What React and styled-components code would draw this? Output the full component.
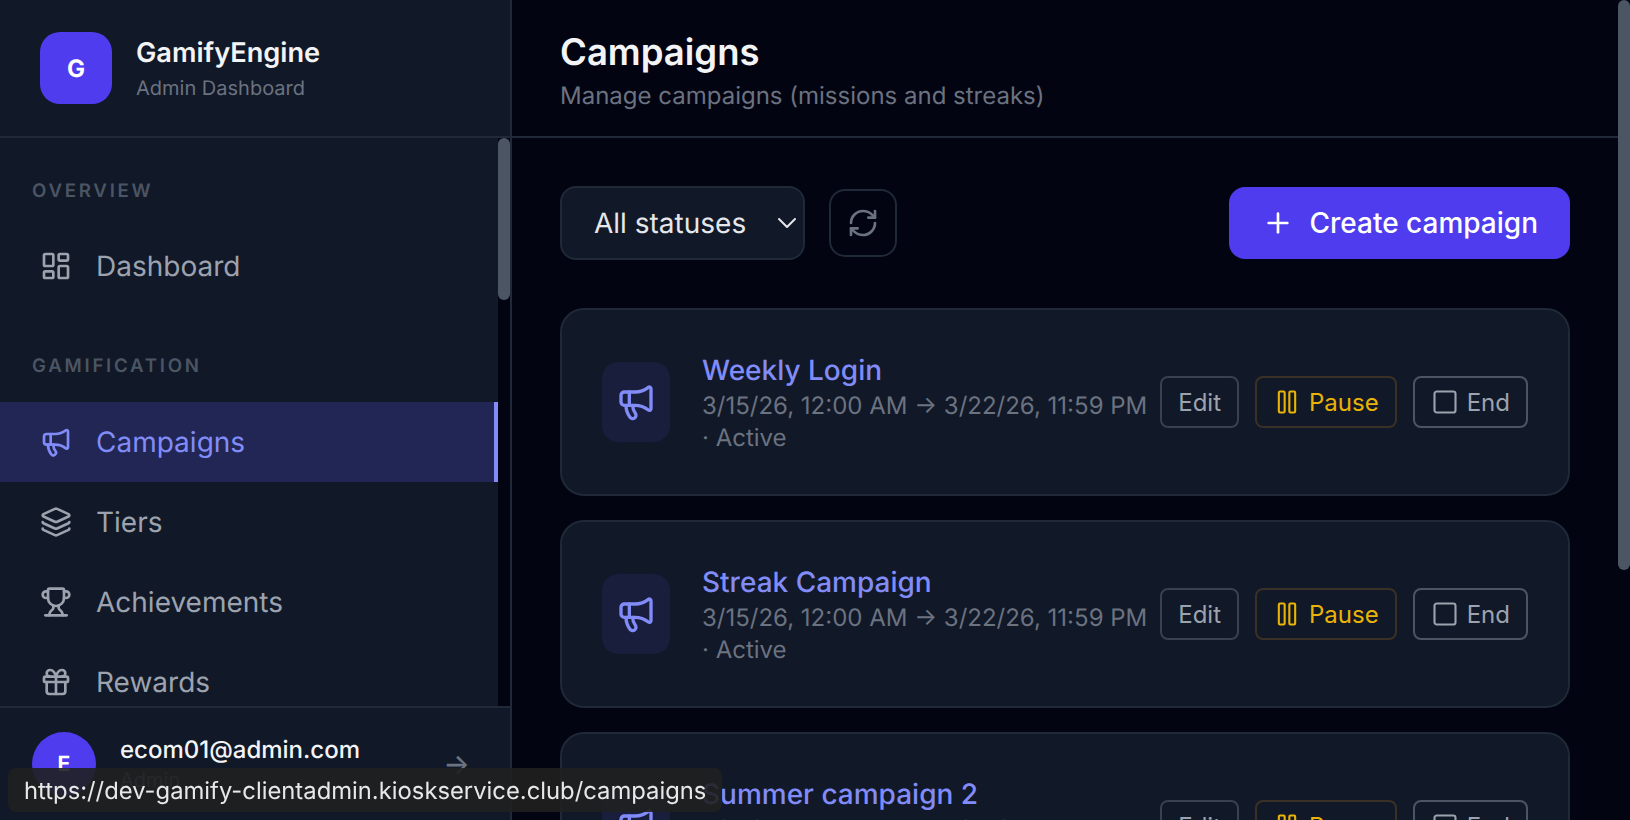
import React from "react";
import styled, { createGlobalStyle } from "styled-components";
import {
  LayoutDashboard,
  Megaphone,
  Layers,
  Trophy,
  Gift,
  RefreshCw,
  Plus,
  Pause,
  Square,
  ChevronDown,
} from "lucide-react";

const GlobalStyle = createGlobalStyle`
  html, body {
    margin: 0;
    height: 100%;
    overflow: hidden;
    background: #030412;
  }
  * {
    box-sizing: border-box;
  }
  body {
    font-family: Inter, "Noto Sans", sans-serif;
    text-rendering: geometricPrecision;
  }
`;

const Shell = styled.div`
  display: flex;
  width: 1630px;
  height: 820px;
  overflow: hidden;
`;

const Sidebar = styled.aside`
  flex: 0 0 512px;
  display: flex;
  flex-direction: column;
  height: 820px;
  background: #111827;
  border-right: 2px solid #1f2937;
`;

const Brand = styled.div`
  flex: 0 0 138px;
  display: flex;
  align-items: center;
  gap: 24px;
  padding-left: 40px;
  border-bottom: 2px solid #1f2937;
`;

const LogoMark = styled.div`
  width: 72px;
  height: 72px;
  border-radius: 20px;
  background: #4e3cee;
  color: #fff;
  display: flex;
  align-items: center;
  justify-content: center;
  font-size: 24px;
  font-weight: 700;
`;

const BrandName = styled.div`
  font-size: 27.2px;
  line-height: 36px;
  font-weight: 600;
  color: #f3f4f6;
`;

const BrandSub = styled.div`
  margin-top: 3px;
  font-size: 20px;
  line-height: 28px;
  color: #6b7280;
`;

const NavRow = styled.div`
  flex: 1;
  min-height: 0;
  display: flex;
`;

const NavColumn = styled.nav`
  flex: 1;
  min-width: 0;
  padding-top: 39px;
  overflow: hidden;
`;

const ScrollTrack = styled.div`
  flex: 0 0 12px;
  background: #030412;
`;

const ScrollThumb = styled.div`
  width: 12px;
  height: ${(p) => p.$length}px;
  background: #4b5563;
  border-radius: 6px;
`;

const SectionLabel = styled.div`
  padding-left: 32px;
  margin: ${(p) => (p.$spaced ? "46px" : "0")} 0 ${(p) => (p.$spaced ? "22px" : "21px")};
  font-size: 18.67px;
  line-height: 28px;
  font-weight: 600;
  letter-spacing: 2.75px;
  color: #4b5563;
`;

const NavItem = styled.a`
  display: flex;
  align-items: center;
  gap: 24px;
  height: 80px;
  padding-left: 40px;
  font-size: 28px;
  color: ${(p) => (p.$active ? "#818cf8" : "#9ca3af")};
  background: ${(p) => (p.$active ? "#212654" : "transparent")};
  border-right: 4px solid ${(p) => (p.$active ? "#818cf8" : "transparent")};
`;

const UserBar = styled.div`
  flex: 0 0 114px;
  display: flex;
  align-items: center;
  padding: 0 40px 0 32px;
  border-top: 2px solid #1f2937;
`;

const Avatar = styled.div`
  flex: 0 0 64px;
  height: 64px;
  margin-right: 24px;
  border-radius: 50%;
  background: #4e3cee;
  color: #fff;
  display: flex;
  align-items: center;
  justify-content: center;
  font-size: 21px;
  font-weight: 700;
`;

const UserInfo = styled.div`
  flex: 1;
`;

const UserMail = styled.div`
  margin-top: -1px;
  font-size: 24px;
  line-height: 32px;
  font-weight: 500;
  color: #f3f4f6;
`;

const UserRole = styled.div`
  font-size: 20px;
  line-height: 28px;
  color: #6b7280;
`;

const LeaveArrow = styled.span`
  font-size: 28px;
  font-weight: 500;
  line-height: 32px;
  color: #6b7280;
`;

const Main = styled.main`
  flex: 1;
  min-width: 0;
  height: 820px;
  overflow: hidden;
`;

const TopBar = styled.header`
  height: 138px;
  padding: 28px 48px 0;
  border-bottom: 2px solid #1f2937;
`;

const PageTitle = styled.h1`
  margin: 0;
  font-size: 36.5px;
  line-height: 48px;
  font-weight: 600;
  color: #f3f4f6;
`;

const PageSub = styled.div`
  margin-top: 4px;
  font-size: 24px;
  line-height: 32px;
  color: #6b7280;
`;

const Content = styled.div`
  padding: 48px;
`;

const Toolbar = styled.div`
  display: flex;
  align-items: center;
  gap: 24px;
  margin-bottom: 48px;
`;

const StatusSelect = styled.div`
  width: 245px;
  height: 74px;
  display: flex;
  align-items: center;
  justify-content: space-between;
  padding: 0 0 0 32px;
  border: 2px solid #1f2937;
  border-radius: 16px;
  background: #111827;
  color: #e5e7eb;
  font-size: 28px;
`;

const IconButton = styled.button`
  width: 68px;
  height: 68px;
  display: flex;
  align-items: center;
  justify-content: center;
  padding: 0;
  border: 2px solid #1f2937;
  border-radius: 16px;
  background: transparent;
  color: #6b7280;
`;

const CreateButton = styled.button`
  margin-left: auto;
  height: 72px;
  display: flex;
  align-items: center;
  gap: 15px;
  padding: 0 32px 0 33px;
  border: 0;
  border-radius: 16px;
  background: #4e3cee;
  color: #fff;
  font-family: inherit;
  font-size: 28px;
  font-weight: 500;
`;

const CardList = styled.div`
  display: flex;
  flex-direction: column;
  gap: 24px;
`;

const Card = styled.article`
  height: 188px;
  display: flex;
  align-items: center;
  padding: 0 40px;
  border: 2px solid #1f2937;
  border-radius: 24px;
  background: #111827;
`;

const CardIcon = styled.div`
  flex: 0 0 68px;
  height: 80px;
  margin-right: 32px;
  border-radius: 16px;
  background: #1a1e3d;
  color: #818cf8;
  display: flex;
  align-items: center;
  justify-content: center;
`;

const CardText = styled.div`
  flex: 1;
  min-width: 0;
  padding-top: 2px;
`;

const CardTitle = styled.div`
  font-size: 28px;
  line-height: 36px;
  font-weight: 500;
  color: #818cf8;
`;

const CardMeta = styled.div`
  margin-top: 2px;
  font-size: 24px;
  line-height: 32px;
  color: #6b7280;
`;

const Actions = styled.div`
  display: flex;
  gap: 16px;
`;

const ActionButton = styled.button`
  height: 52px;
  display: flex;
  align-items: center;
  gap: 8px;
  padding: 0 16px;
  border: 2px solid ${(p) => p.$border};
  border-radius: 8px;
  background: transparent;
  color: ${(p) => p.$color};
  font-family: inherit;
  font-size: 24px;
`;

const StatusTip = styled.div`
  position: fixed;
  left: 8px;
  bottom: 8px;
  height: 44px;
  display: flex;
  align-items: center;
  padding: 0 16px;
  border-radius: 8px;
  background: rgba(32, 32, 32, 0.9);
  color: #e8e8e8;
  font-size: 23.8px;
`;

const navItems = [
  { label: "Campaigns", icon: Megaphone, active: true },
  { label: "Tiers", icon: Layers },
  { label: "Achievements", icon: Trophy },
  { label: "Rewards", icon: Gift },
];

const campaigns = ["Weekly Login", "Streak Campaign", "Summer campaign 2"];

function CampaignCard({ title }) {
  return (
    <Card>
      <CardIcon>
        <Megaphone size={40} strokeWidth={2} />
      </CardIcon>
      <CardText>
        <CardTitle>{title}</CardTitle>
        <CardMeta>3/15/26, 12:00 AM → 3/22/26, 11:59 PM · Active</CardMeta>
      </CardText>
      <Actions>
        <ActionButton $border="#374151" $color="#9ca3af">Edit</ActionButton>
        <ActionButton $border="#3b3026" $color="#eab308">
          <Pause size={28} strokeWidth={1.8} />
          Pause
        </ActionButton>
        <ActionButton $border="#4b5563" $color="#9ca3af">
          <Square size={28} strokeWidth={1.8} />
          End
        </ActionButton>
      </Actions>
    </Card>
  );
}

export default function App() {
  return (
    <Shell>
      <GlobalStyle />
      <Sidebar>
        <Brand>
          <LogoMark>G</LogoMark>
          <div>
            <BrandName>GamifyEngine</BrandName>
            <BrandSub>Admin Dashboard</BrandSub>
          </div>
        </Brand>
        <NavRow>
          <NavColumn>
            <SectionLabel>OVERVIEW</SectionLabel>
            <NavItem>
              <LayoutDashboard size={32} />
              Dashboard
            </NavItem>
            <SectionLabel $spaced>GAMIFICATION</SectionLabel>
            {navItems.map((item) => (
              <NavItem key={item.label} $active={item.active}>
                <item.icon size={32} />
                {item.label}
              </NavItem>
            ))}
          </NavColumn>
          <ScrollTrack>
            <ScrollThumb $length={162} />
          </ScrollTrack>
        </NavRow>
        <UserBar>
          <Avatar>E</Avatar>
          <UserInfo>
            <UserMail>ecom01@admin.com</UserMail>
            <UserRole>Admin</UserRole>
          </UserInfo>
          <LeaveArrow>→</LeaveArrow>
        </UserBar>
      </Sidebar>
      <Main>
        <TopBar>
          <PageTitle>Campaigns</PageTitle>
          <PageSub>Manage campaigns (missions and streaks)</PageSub>
        </TopBar>
        <Content>
          <Toolbar>
            <StatusSelect>
              All statuses
              <ChevronDown size={32} strokeWidth={1.5} />
            </StatusSelect>
            <IconButton>
              <RefreshCw size={32} />
            </IconButton>
            <CreateButton>
              <Plus size={32} />
              Create campaign
            </CreateButton>
          </Toolbar>
          <CardList>
            {campaigns.map((title) => (
              <CampaignCard key={title} title={title} />
            ))}
          </CardList>
        </Content>
      </Main>
      <ScrollTrack>
        <ScrollThumb $length={570} />
      </ScrollTrack>
      <StatusTip>https://dev-gamify-clientadmin.kioskservice.club/campaigns</StatusTip>
    </Shell>
  );
}
